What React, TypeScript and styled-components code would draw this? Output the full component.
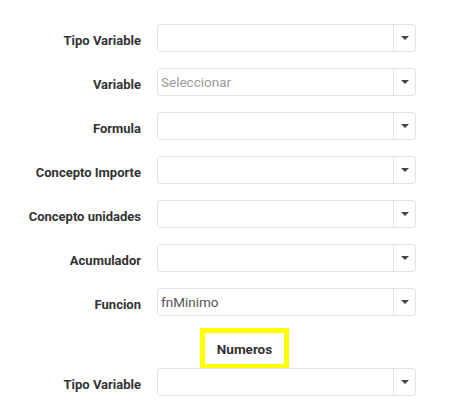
import React from 'react'
import styled, { createGlobalStyle } from 'styled-components'

const GlobalStyle = createGlobalStyle`
  html, body {
    margin: 0;
    padding: 0;
    background: #fff;
  }
  body {
    font-family: Roboto, "Liberation Sans", Arial, sans-serif;
  }
`

const Form = styled.div`
  display: flex;
  flex-direction: column;
  padding-top: 24px;
  width: 454px;
`

const Row = styled.div<{ gapAfter?: number }>`
  display: flex;
  align-items: center;
  gap: 16px;
  margin-bottom: ${({ gapAfter }) => (gapAfter ?? 16)}px;
`

const Label = styled.label`
  width: 141px;
  text-align: right;
  font-size: 13px;
  font-weight: 700;
  color: #333;
  padding-top: 5px;
  white-space: nowrap;
`

const SelectBox = styled.div`
  display: flex;
  width: 259px;
  height: 28px;
  box-sizing: border-box;
  border: 1px solid #e2e2e2;
  border-radius: 3px;
  background: #fff;
`

const Value = styled.span<{ placeholder?: boolean }>`
  flex: 1;
  display: flex;
  align-items: center;
  padding-left: 3px;
  font-size: 13.5px;
  color: ${({ placeholder }) => (placeholder ? '#9a9a9a' : '#555')};
`

const Toggle = styled.span`
  width: 21px;
  display: flex;
  align-items: center;
  justify-content: center;
  border-left: 1px solid #e2e2e2;
`

const Caret = styled.span`
  width: 0;
  height: 0;
  border-left: 4px solid transparent;
  border-right: 4px solid transparent;
  border-top: 4px solid #444;
`

const SectionRow = styled.div`
  display: flex;
  padding-left: 200px;
  margin-bottom: -1px;
`

const Highlight = styled.div`
  width: 89px;
  height: 41px;
  box-sizing: border-box;
  border: 5px solid #ffff00;
  display: flex;
  align-items: center;
  justify-content: center;
  font-size: 13.5px;
  font-weight: 700;
  color: #333;
`

type Field = { label: string; value?: string; placeholder?: boolean }

const fields: Field[] = [
  { label: 'Tipo Variable' },
  { label: 'Variable', value: 'Seleccionar', placeholder: true },
  { label: 'Formula' },
  { label: 'Concepto Importe' },
  { label: 'Concepto unidades' },
  { label: 'Acumulador' },
  { label: 'Funcion', value: 'fnMinimo' },
]

const Select = ({ value, placeholder }: { value?: string; placeholder?: boolean }) => (
  <SelectBox>
    <Value placeholder={placeholder}>{value}</Value>
    <Toggle>
      <Caret />
    </Toggle>
  </SelectBox>
)

export default function App() {
  return (
    <>
      <GlobalStyle />
      <Form>
        {fields.map((f, i) => (
          <Row key={f.label} gapAfter={i === fields.length - 1 ? 12 : 16}>
            <Label>{f.label}</Label>
            <Select value={f.value} placeholder={f.placeholder} />
          </Row>
        ))}
        <SectionRow>
          <Highlight>Numeros</Highlight>
        </SectionRow>
        <Row>
          <Label>Tipo Variable</Label>
          <Select />
        </Row>
      </Form>
    </>
  )
}
